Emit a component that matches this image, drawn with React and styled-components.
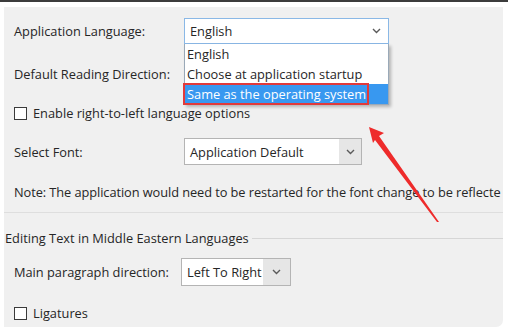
import React from 'react'
import styled, { createGlobalStyle } from 'styled-components'

const GlobalStyle = createGlobalStyle`
  html, body {
    margin: 0;
    padding: 0;
    background: #ffffff;
  }
  body {
    font-family: "Open Sans", "Noto Sans", sans-serif;
    font-size: 12.8px;
    color: #262626;
  }
`

const Chevron = ({ color = '#5a5a5a' }) => (
  <svg width="9" height="6" viewBox="0 0 9 6">
    <path d="M1 1 L4.5 4.5 L8 1" fill="none" stroke={color} strokeWidth="1.4" />
  </svg>
)

const Arrow = () => (
  <ArrowSvg width="508" height="331" viewBox="0 0 508 331">
    <polygon points="369,127 384,133 379,136 439,222 437,222 375,140 373,143" fill="#ee2b2b" />
  </ArrowSvg>
)

export default function App() {
  return (
    <>
      <GlobalStyle />
      <Frame>
        <Panel>
          <Section>
            <Row $h={26} $mt={11}>
              <Label>Application Language:</Label>
              <ComboWrap>
                <Combo $w={205} $focused>
                  <ComboText>English</ComboText>
                  <ComboArrow $plain>
                    <Chevron />
                  </ComboArrow>
                </Combo>
                <DropList>
                  <DropItem>English</DropItem>
                  <DropItem>Choose at application startup</DropItem>
                  <DropItem $selected>Same as the operating system</DropItem>
                  <Marker />
                </DropList>
              </ComboWrap>
            </Row>
            <Row $h={26} $mt={17}>
              <Label>Default Reading Direction:</Label>
            </Row>
            <Row $h={18} $mt={17}>
              <Check />
              <CheckLabel>Enable right-to-left language options</CheckLabel>
            </Row>
            <Row $h={27} $mt={16}>
              <Label>Select Font:</Label>
              <Combo $w={178}>
                <ComboText>Application Default</ComboText>
                <ComboArrow $w={22}>
                  <Chevron />
                </ComboArrow>
              </Combo>
            </Row>
            <Row $h={20} $mt={17}>
              <Note>
                Note: The application would need to be restarted for the font change to be reflecte
              </Note>
            </Row>
          </Section>
          <Separator />
          <Group>
            <GroupTitle>
              <span>Editing Text in Middle Eastern Languages</span>
              <GroupLine />
            </GroupTitle>
            <Row $h={28} $mt={10}>
              <Label $w={167}>Main paragraph direction:</Label>
              <Combo $w={110}>
                <ComboText>Left To Right</ComboText>
                <ComboArrow $w={27}>
                  <Chevron />
                </ComboArrow>
              </Combo>
            </Row>
            <Row $h={18} $mt={18}>
              <Check />
              <CheckLabel>Ligatures</CheckLabel>
            </Row>
          </Group>
        </Panel>
        <Arrow />
      </Frame>
    </>
  )
}

const Frame = styled.div`
  position: relative;
  width: 508px;
  height: 331px;
  box-sizing: border-box;
  border-top: 2px solid #3c3c3c;
  padding: 5px 5px 4px 4px;
  overflow: hidden;
`

const Panel = styled.div`
  height: 100%;
  background: #f0f0f0;
  border-bottom-right-radius: 7px;
  display: flex;
  flex-direction: column;
  overflow: hidden;
`

const Section = styled.div`
  display: flex;
  flex-direction: column;
  padding-left: 10px;
`

const Row = styled.div`
  display: flex;
  align-items: center;
  height: ${(p) => p.$h}px;
  margin-top: ${(p) => p.$mt}px;
  white-space: nowrap;
`

const Label = styled.div`
  width: ${(p) => p.$w || 170}px;
  flex-shrink: 0;
`

const ComboWrap = styled.div`
  position: relative;
  height: 100%;
`

const Combo = styled.div`
  display: flex;
  align-items: stretch;
  box-sizing: border-box;
  width: ${(p) => p.$w}px;
  height: 100%;
  border: 1px solid ${(p) => (p.$focused ? '#8ab8e6' : '#b4b4b4')};
  background: #ffffff;
`

const ComboText = styled.div`
  flex: 1;
  display: flex;
  align-items: center;
  padding-left: 5px;
  overflow: hidden;
`

const ComboArrow = styled.div`
  width: ${(p) => p.$w || 24}px;
  display: flex;
  align-items: center;
  justify-content: center;
  background: ${(p) => (p.$plain ? '#ffffff' : '#e6e6e6')};
`

const DropList = styled.div`
  position: absolute;
  top: 26px;
  left: 0;
  width: 205px;
  box-sizing: border-box;
  background: #ffffff;
  border: 1px solid #9aa9b8;
  border-top: none;
  box-shadow: 2px 2px 3px rgba(0, 0, 0, 0.25);
  z-index: 2;
`

const DropItem = styled.div`
  height: 20px;
  line-height: 20px;
  padding-left: 2px;
  color: ${(p) => (p.$selected ? '#ffffff' : '#262626')};
  background: ${(p) => (p.$selected ? '#3898f0' : 'transparent')};
`

const Marker = styled.div`
  position: absolute;
  left: -2px;
  top: 39px;
  width: 186px;
  height: 22px;
  box-sizing: border-box;
  border: 2px solid #e23a3a;
`

const Check = styled.div`
  width: 13px;
  height: 13px;
  box-sizing: border-box;
  border: 1px solid #3a3a3a;
  background: #ffffff;
  margin-right: 6px;
`

const CheckLabel = styled.div``

const Note = styled.div`
  white-space: nowrap;
  letter-spacing: -0.07px;
`

const Separator = styled.div`
  margin-top: 10px;
  height: 1px;
  background: #dedede;
`

const Group = styled.div`
  display: flex;
  flex-direction: column;
  padding-left: 10px;
`

const GroupTitle = styled.div`
  display: flex;
  align-items: center;
  height: 20px;
  margin-top: 15px;
  margin-left: -9px;
  white-space: nowrap;
`

const GroupLine = styled.div`
  flex: 1;
  height: 1px;
  margin-left: 3px;
  background: #d6d6d6;
`

const ArrowSvg = styled.svg`
  position: absolute;
  top: -2px;
  left: 0;
  pointer-events: none;
  z-index: 3;
`
